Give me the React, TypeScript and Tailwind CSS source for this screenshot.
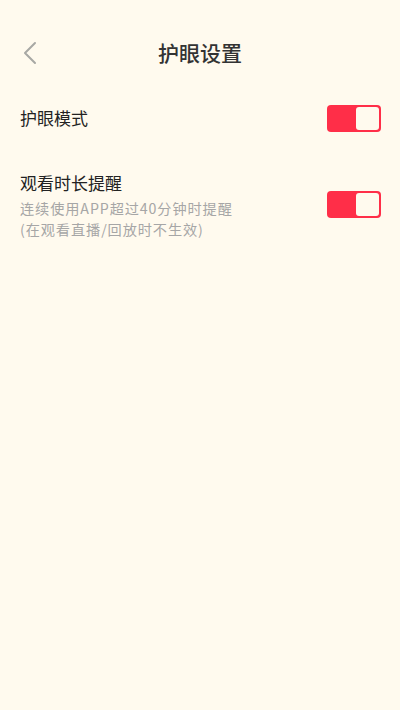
import React from 'react';

function Toggle({ on }: { on: boolean }) {
  return (
    <div
      className={`w-[54px] h-[27px] rounded-[4px] p-[2px] flex ${on ? 'bg-[#ff2e48] justify-end' : 'bg-[#ddd] justify-start'}`}
    >
      <div className="w-[23px] h-[23px] rounded-[3px] bg-[#fffaee]" />
    </div>
  );
}

export default function App() {
  return (
    <div
      className="w-[400px] h-[710px] bg-[#fffaee] text-[#222] pt-[22px]"
      style={{ fontFamily: '"Noto Sans CJK SC", "Noto Sans", sans-serif' }}
    >
      <header className="relative h-[62px] flex items-center justify-center">
        <button className="absolute left-[20px] top-[18px] w-[20px] h-[26px] flex items-center justify-center">
          <svg width="14" height="24" viewBox="0 0 14 24" fill="none">
            <path d="M12 2 L2 12 L12 22" stroke="#a8a8a4" strokeWidth="2" strokeLinecap="round" strokeLinejoin="round" />
          </svg>
        </button>
        <h1 className="text-[21px] font-medium text-[#333]">护眼设置</h1>
      </header>

      <div className="flex items-center justify-between pl-[20px] pr-[19px] mt-[2px] h-[64px]">
        <span className="text-[17px]">护眼模式</span>
        <Toggle on />
      </div>

      <div className="flex items-center justify-between pl-[20px] pr-[19px] mt-[20px]">
        <div className="flex flex-col">
          <span className="text-[17px] leading-[26px]">观看时长提醒</span>
          <span className="text-[14.2px] leading-[21px] tracking-[0.9px] text-[#a6a6a6] mt-[1.5px]">连续使用APP超过40分钟时提醒</span>
          <span className="text-[14.2px] leading-[21px] tracking-[0.9px] text-[#a6a6a6]">(在观看直播/回放时不生效)</span>
        </div>
        <Toggle on />
      </div>
    </div>
  );
}
